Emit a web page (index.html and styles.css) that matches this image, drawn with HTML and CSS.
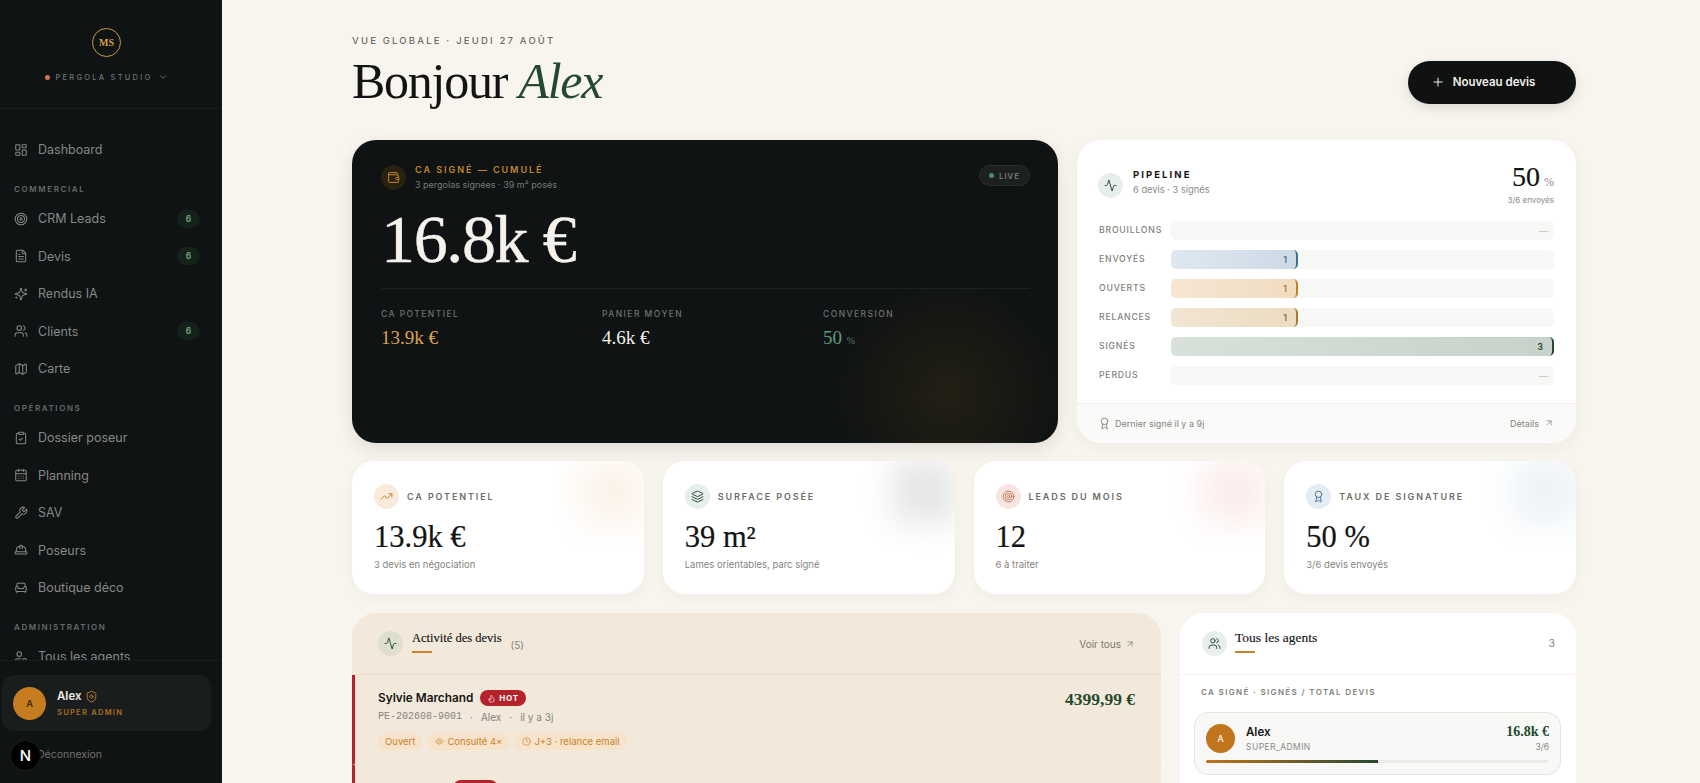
FILE: index.html
```html
<!DOCTYPE html>
<html lang="fr">
<head>
<meta charset="utf-8">
<title>Pergola Studio</title>
<link rel="stylesheet" href="styles.css">
</head>
<body>
<svg class="defs" width="0" height="0" aria-hidden="true">
<symbol id="i-dash" viewBox="0 0 24 24"><rect x="3" y="3" width="7" height="9" rx="1"/><rect x="14" y="3" width="7" height="5" rx="1"/><rect x="14" y="12" width="7" height="9" rx="1"/><rect x="3" y="16" width="7" height="5" rx="1"/></symbol>
<symbol id="i-target" viewBox="0 0 24 24"><circle cx="12" cy="12" r="10"/><circle cx="12" cy="12" r="6"/><circle cx="12" cy="12" r="2"/></symbol>
<symbol id="i-file" viewBox="0 0 24 24"><path d="M15 2H6a2 2 0 0 0-2 2v16a2 2 0 0 0 2 2h12a2 2 0 0 0 2-2V7Z"/><path d="M14 2v4a2 2 0 0 0 2 2h4"/><path d="M10 9H8"/><path d="M16 13H8"/><path d="M16 17H8"/></symbol>
<symbol id="i-spark" viewBox="0 0 24 24"><path d="M9.937 15.5A2 2 0 0 0 8.5 14.063l-6.135-1.582a.5.5 0 0 1 0-.962L8.5 9.936A2 2 0 0 0 9.937 8.5l1.582-6.135a.5.5 0 0 1 .963 0L14.063 8.5A2 2 0 0 0 15.5 9.937l6.135 1.581a.5.5 0 0 1 0 .964L15.5 14.063a2 2 0 0 0-1.437 1.437l-1.582 6.135a.5.5 0 0 1-.963 0z"/><path d="M20 3v4"/><path d="M22 5h-4"/><path d="M4 17v2"/><path d="M5 18H3"/></symbol>
<symbol id="i-users" viewBox="0 0 24 24"><path d="M16 21v-2a4 4 0 0 0-4-4H6a4 4 0 0 0-4 4v2"/><circle cx="9" cy="7" r="4"/><path d="M22 21v-2a4 4 0 0 0-3-3.87"/><path d="M16 3.13a4 4 0 0 1 0 7.75"/></symbol>
<symbol id="i-map" viewBox="0 0 24 24"><path d="M14.106 5.553a2 2 0 0 0 1.788 0l3.659-1.83A1 1 0 0 1 21 4.619v12.764a1 1 0 0 1-.553.894l-4.553 2.277a2 2 0 0 1-1.788 0l-4.212-2.106a2 2 0 0 0-1.788 0l-3.659 1.83A1 1 0 0 1 3 19.381V6.618a1 1 0 0 1 .553-.894l4.553-2.277a2 2 0 0 1 1.788 0z"/><path d="M15 5.764v15"/><path d="M9 3.236v15"/></symbol>
<symbol id="i-clip" viewBox="0 0 24 24"><rect x="8" y="2" width="8" height="4" rx="1"/><path d="M16 4h2a2 2 0 0 1 2 2v14a2 2 0 0 1-2 2H6a2 2 0 0 1-2-2V6a2 2 0 0 1 2-2h2"/><path d="m9 14 2 2 4-4"/></symbol>
<symbol id="i-cal" viewBox="0 0 24 24"><path d="M8 2v4"/><path d="M16 2v4"/><rect x="3" y="4" width="18" height="18" rx="2"/><path d="M3 10h18"/><path d="M8 14h.01M12 14h.01M16 14h.01M8 18h.01M12 18h.01M16 18h.01"/></symbol>
<symbol id="i-wrench" viewBox="0 0 24 24"><path d="M14.7 6.3a1 1 0 0 0 0 1.4l1.6 1.6a1 1 0 0 0 1.4 0l3.77-3.77a6 6 0 0 1-7.94 7.94l-6.91 6.91a2.12 2.12 0 0 1-3-3l6.91-6.91a6 6 0 0 1 7.94-7.94l-3.76 3.76z"/></symbol>
<symbol id="i-hat" viewBox="0 0 24 24"><path d="M10 10V5a1 1 0 0 1 1-1h2a1 1 0 0 1 1 1v5"/><path d="M14 6a6 6 0 0 1 6 6v3"/><path d="M4 15v-3a6 6 0 0 1 6-6"/><rect x="2" y="15" width="20" height="4" rx="1"/></symbol>
<symbol id="i-sofa" viewBox="0 0 24 24"><path d="M19 9V6a2 2 0 0 0-2-2H7a2 2 0 0 0-2 2v3"/><path d="M3 16a2 2 0 0 0 2 2h14a2 2 0 0 0 2-2v-5a2 2 0 0 0-4 0v1.5a.5.5 0 0 1-.5.5h-9a.5.5 0 0 1-.5-.5V11a2 2 0 0 0-4 0z"/><path d="M5 18v2"/><path d="M19 18v2"/></symbol>
<symbol id="i-agent" viewBox="0 0 24 24"><circle cx="9" cy="7" r="4"/><path d="M2 21v-2a4 4 0 0 1 4-4h5"/><circle cx="18" cy="18" r="3.5"/></symbol>
<symbol id="i-shield" viewBox="0 0 24 24"><path d="M20 13c0 5-3.5 7.5-7.66 8.95a1 1 0 0 1-.67-.01C7.5 20.5 4 18 4 13V6a1 1 0 0 1 1-1c2 0 4.5-1.2 6.24-2.72a1.17 1.17 0 0 1 1.52 0C14.51 3.81 17 5 19 5a1 1 0 0 1 1 1z"/><circle cx="12" cy="12" r="3"/></symbol>
<symbol id="i-wallet" viewBox="0 0 24 24"><path d="M19 7V4a1 1 0 0 0-1-1H5a2 2 0 0 0 0 4h15a1 1 0 0 1 1 1v4h-3a2 2 0 0 0 0 4h3a1 1 0 0 0 1-1v-2a1 1 0 0 0-1-1"/><path d="M3 5v14a2 2 0 0 0 2 2h15a1 1 0 0 0 1-1v-4"/></symbol>
<symbol id="i-activity" viewBox="0 0 24 24"><path d="M22 12h-2.48a2 2 0 0 0-1.93 1.46l-2.35 8.36a.25.25 0 0 1-.48 0L9.24 2.18a.25.25 0 0 0-.48 0l-2.35 8.36A2 2 0 0 1 4.49 12H2"/></symbol>
<symbol id="i-trend" viewBox="0 0 24 24"><path d="M16 7h6v6"/><path d="m22 7-8.5 8.5-5-5L2 17"/></symbol>
<symbol id="i-layers" viewBox="0 0 24 24"><path d="M12.83 2.18a2 2 0 0 0-1.66 0L2.6 6.08a1 1 0 0 0 0 1.83l8.58 3.91a2 2 0 0 0 1.66 0l8.58-3.9a1 1 0 0 0 0-1.83z"/><path d="M2 12a1 1 0 0 0 .58.91l8.6 3.91a2 2 0 0 0 1.65 0l8.58-3.9A1 1 0 0 0 22 12"/><path d="M2 17a1 1 0 0 0 .58.91l8.6 3.91a2 2 0 0 0 1.65 0l8.58-3.9A1 1 0 0 0 22 17"/></symbol>
<symbol id="i-award" viewBox="0 0 24 24"><path d="m15.477 12.89 1.515 8.526a.5.5 0 0 1-.81.47l-3.58-2.687a1 1 0 0 0-1.197 0l-3.586 2.686a.5.5 0 0 1-.81-.469l1.514-8.526"/><circle cx="12" cy="8" r="6"/></symbol>
<symbol id="i-flame" viewBox="0 0 24 24"><path d="M8.5 14.5A2.5 2.5 0 0 0 11 12c0-1.38-.5-2-1-3-1.072-2.143-.224-4.054 2-6 .5 2.5 2 4.9 4 6.5 2 1.6 3 3.5 3 5.5a7 7 0 1 1-14 0c0-1.153.433-2.294 1-3a2.5 2.5 0 0 0 2.5 2.5z"/></symbol>
<symbol id="i-eye" viewBox="0 0 24 24"><path d="M2.062 12.348a1 1 0 0 1 0-.696 10.75 10.75 0 0 1 19.876 0 1 1 0 0 1 0 .696 10.75 10.75 0 0 1-19.876 0"/><circle cx="12" cy="12" r="3"/></symbol>
<symbol id="i-clock" viewBox="0 0 24 24"><circle cx="12" cy="12" r="10"/><path d="M12 6v6l4 2"/></symbol>
<symbol id="i-arrow" viewBox="0 0 24 24"><path d="M7 7h10v10"/><path d="M7 17 17 7"/></symbol>
<symbol id="i-plus" viewBox="0 0 24 24"><path d="M5 12h14"/><path d="M12 5v14"/></symbol>
<symbol id="i-chev" viewBox="0 0 24 24"><path d="m6 9 6 6 6-6"/></symbol>
</svg>

<div class="app">
  <aside class="sidebar">
    <div class="brand">
      <div class="logo">MS</div>
      <div class="studio"><span class="studio-dot"></span><span>PERGOLA STUDIO</span><svg class="ico ico-10"><use href="#i-chev"/></svg></div>
    </div>
    <nav class="nav">
      <a class="nav-item"><svg class="ico ico-14"><use href="#i-dash"/></svg><span>Dashboard</span></a>
      <div class="nav-title">COMMERCIAL</div>
      <a class="nav-item"><svg class="ico ico-14"><use href="#i-target"/></svg><span>CRM Leads</span><b class="count">6</b></a>
      <a class="nav-item"><svg class="ico ico-14"><use href="#i-file"/></svg><span>Devis</span><b class="count">6</b></a>
      <a class="nav-item"><svg class="ico ico-14"><use href="#i-spark"/></svg><span>Rendus IA</span></a>
      <a class="nav-item"><svg class="ico ico-14"><use href="#i-users"/></svg><span>Clients</span><b class="count">6</b></a>
      <a class="nav-item"><svg class="ico ico-14"><use href="#i-map"/></svg><span>Carte</span></a>
      <div class="nav-title">OPÉRATIONS</div>
      <a class="nav-item"><svg class="ico ico-14"><use href="#i-clip"/></svg><span>Dossier poseur</span></a>
      <a class="nav-item"><svg class="ico ico-14"><use href="#i-cal"/></svg><span>Planning</span></a>
      <a class="nav-item"><svg class="ico ico-14"><use href="#i-wrench"/></svg><span>SAV</span></a>
      <a class="nav-item"><svg class="ico ico-14"><use href="#i-hat"/></svg><span>Poseurs</span></a>
      <a class="nav-item"><svg class="ico ico-14"><use href="#i-sofa"/></svg><span>Boutique déco</span></a>
      <div class="nav-title">ADMINISTRATION</div>
      <a class="nav-item"><svg class="ico ico-14"><use href="#i-agent"/></svg><span>Tous les agents</span></a>
    </nav>
    <div class="side-foot">
      <div class="user-card">
        <div class="user-avatar">A</div>
        <div class="user-text">
          <div class="user-name">Alex <svg class="ico ico-12"><use href="#i-shield"/></svg></div>
          <div class="user-role">SUPER ADMIN</div>
        </div>
      </div>
      <div class="logout">Déconnexion</div>
      <div class="next-badge">N</div>
    </div>
  </aside>

  <main class="main">
    <header class="page-head">
      <div>
        <div class="eyebrow">VUE GLOBALE · JEUDI 27 AOÛT</div>
        <h1 class="hello">Bonjour <em>Alex</em></h1>
      </div>
      <button class="new-btn"><svg class="ico ico-14"><use href="#i-plus"/></svg>Nouveau devis</button>
    </header>

    <section class="top-grid">
      <article class="hero">
        <div class="hero-head">
          <span class="round hero-icon"><svg class="ico ico-12"><use href="#i-wallet"/></svg></span>
          <div>
            <div class="hero-title">CA SIGNÉ — CUMULÉ</div>
            <div class="hero-sub">3 pergolas signées · 39 m² posés</div>
          </div>
          <span class="live"><i></i>LIVE</span>
        </div>
        <div class="hero-value">16.8k €</div>
        <div class="hero-stats">
          <div><div class="stat-label">CA POTENTIEL</div><div class="stat-value gold">13.9k €</div></div>
          <div><div class="stat-label">PANIER MOYEN</div><div class="stat-value">4.6k €</div></div>
          <div><div class="stat-label">CONVERSION</div><div class="stat-value green">50 <small>%</small></div></div>
        </div>
      </article>

      <article class="pipeline">
        <div class="pipe-head">
          <span class="round round-green"><svg class="ico ico-12"><use href="#i-activity"/></svg></span>
          <div class="pipe-titles">
            <div class="pipe-title">PIPELINE</div>
            <div class="pipe-sub">6 devis · 3 signés</div>
          </div>
          <div class="pipe-rate">
            <div class="pipe-num">50 <small>%</small></div>
            <div class="pipe-sub-r">3/6 envoyés</div>
          </div>
        </div>
        <div class="pipe-rows">
          <div class="pipe-row"><span class="pipe-label">BROUILLONS</span><div class="track"><span class="empty">—</span></div></div>
          <div class="pipe-row"><span class="pipe-label">ENVOYÉS</span><div class="track"><div class="fill fill-blue">1</div></div></div>
          <div class="pipe-row"><span class="pipe-label">OUVERTS</span><div class="track"><div class="fill fill-orange">1</div></div></div>
          <div class="pipe-row"><span class="pipe-label">RELANCES</span><div class="track"><div class="fill fill-sand">1</div></div></div>
          <div class="pipe-row"><span class="pipe-label">SIGNÉS</span><div class="track"><div class="fill fill-green fill-full">3</div></div></div>
          <div class="pipe-row"><span class="pipe-label">PERDUS</span><div class="track"><span class="empty">—</span></div></div>
        </div>
        <div class="pipe-foot">
          <span class="pipe-last"><svg class="ico ico-12"><use href="#i-award"/></svg>Dernier signé il y a 9j</span>
          <span class="pipe-link">Détails <svg class="ico ico-10"><use href="#i-arrow"/></svg></span>
        </div>
      </article>
    </section>

    <section class="kpis">
      <article class="kpi kpi-orange">
        <div class="kpi-head"><span class="round round-orange"><svg class="ico ico-12"><use href="#i-trend"/></svg></span><span class="kpi-label">CA POTENTIEL</span></div>
        <div class="kpi-value">13.9k €</div>
        <div class="kpi-sub">3 devis en négociation</div>
      </article>
      <article class="kpi kpi-green">
        <div class="kpi-head"><span class="round round-green"><svg class="ico ico-12"><use href="#i-layers"/></svg></span><span class="kpi-label">SURFACE POSÉE</span></div>
        <div class="kpi-value">39 m²</div>
        <div class="kpi-sub">Lames orientables, parc signé</div>
      </article>
      <article class="kpi kpi-red">
        <div class="kpi-head"><span class="round round-red"><svg class="ico ico-12"><use href="#i-target"/></svg></span><span class="kpi-label">LEADS DU MOIS</span></div>
        <div class="kpi-value">12</div>
        <div class="kpi-sub">6 à traiter</div>
      </article>
      <article class="kpi kpi-blue">
        <div class="kpi-head"><span class="round round-blue"><svg class="ico ico-12"><use href="#i-award"/></svg></span><span class="kpi-label">TAUX DE SIGNATURE</span></div>
        <div class="kpi-value">50 %</div>
        <div class="kpi-sub">3/6 devis envoyés</div>
      </article>
    </section>

    <section class="bottom-grid">
      <article class="activity">
        <div class="panel-head">
          <span class="round round-olive"><svg class="ico ico-12"><use href="#i-activity"/></svg></span>
          <div class="panel-title-wrap"><div class="panel-title">Activité des devis</div><div class="rule"></div></div>
          <span class="panel-count">(5)</span>
          <span class="voir">Voir tous <svg class="ico ico-10"><use href="#i-arrow"/></svg></span>
        </div>
        <div class="deal">
          <div class="deal-main">
            <div class="deal-line"><span class="deal-name">Sylvie Marchand</span><span class="hot"><svg class="ico ico-9"><use href="#i-flame"/></svg>HOT</span></div>
            <div class="deal-meta"><span class="mono">PE-202608-9001</span><span>·</span><span>Alex</span><span>·</span><span>il y a 3j</span></div>
            <div class="tags">
              <span class="tag">Ouvert</span>
              <span class="tag"><svg class="ico ico-9"><use href="#i-eye"/></svg>Consulté 4×</span>
              <span class="tag"><svg class="ico ico-9"><use href="#i-clock"/></svg>J+3 · relance email</span>
            </div>
          </div>
          <div class="deal-amount">4399,99 €</div>
        </div>
        <div class="deal">
          <div class="deal-main">
            <div class="deal-line"><span class="deal-name">Paul Lebrun</span><span class="hot"><svg class="ico ico-9"><use href="#i-flame"/></svg>HOT</span></div>
          </div>
        </div>
      </article>

      <article class="agents">
        <div class="panel-head panel-head-agents">
          <span class="round round-green"><svg class="ico ico-12"><use href="#i-users"/></svg></span>
          <div class="panel-title-wrap"><div class="panel-title panel-title-lg">Tous les agents</div><div class="rule"></div></div>
          <span class="agent-count">3</span>
        </div>
        <div class="agents-body">
          <div class="agents-cap">CA SIGNÉ · SIGNÉS / TOTAL DEVIS</div>
          <div class="agent">
            <div class="agent-top">
              <div class="agent-avatar">A</div>
              <div class="agent-id"><div class="agent-name">Alex</div><div class="agent-role">SUPER_ADMIN</div></div>
              <div class="agent-num"><div class="agent-ca">16.8k €</div><div class="agent-ratio">3/6</div></div>
            </div>
            <div class="agent-bar"><div class="agent-fill"></div></div>
          </div>
        </div>
      </article>
    </section>
  </main>
</div>
</body>
</html>
```

FILE: styles.css
```css
* { box-sizing: border-box; }
html, body { margin: 0; height: 100%; overflow: hidden; }
body { font-family: Inter, "Liberation Sans", sans-serif; background: #f8f5ef; color: #111; }
.defs { position: absolute; }
.ico { fill: none; stroke: currentColor; stroke-width: 1.75; stroke-linecap: round; stroke-linejoin: round; flex: none; }
.ico-9 { width: 9px; height: 9px; }
.ico-10 { width: 10px; height: 10px; }
.ico-11 { width: 11px; height: 11px; }
.ico-12 { width: 13px; height: 13px; }
.ico-14 { width: 14px; height: 14px; }

.app { display: flex; height: 783px; }

/* Sidebar */
.sidebar { width: 222px; flex: none; height: 783px; background: #0f1313; display: flex; flex-direction: column; color: #8a8d8a; border-right: 1px solid #15191a; }
.brand { height: 109px; flex: none; border-bottom: 1px solid #191d1d; display: flex; flex-direction: column; align-items: center; padding: 28px 8px 0 0; }
.logo { width: 29px; height: 29px; border-radius: 50%; border: 1.5px solid #c99a45; color: #d3a04b; font: 700 10px "Liberation Serif", serif; display: flex; align-items: center; justify-content: center; }
.studio { margin-top: 15px; display: flex; align-items: center; gap: 5px; font-size: 7.5px; font-weight: 500; letter-spacing: 0.3em; color: #6f7270; }
.studio .ico { stroke-width: 2.25; }
.studio-dot { width: 5px; height: 5px; border-radius: 50%; background: #d0705a; }
.nav { flex: 1; min-height: 0; overflow: hidden; padding: 22px 0 0 14px; }
.nav-item { display: flex; align-items: center; height: 37.5px; font-size: 12.5px; color: #858886; gap: 10px; padding-right: 21px; }
.nav-item span { flex: 1; }
.count { width: 23px; height: 18px; border-radius: 9px; background: #142219; color: #79a986; font-size: 8.5px; font-weight: 600; display: flex; align-items: center; justify-content: center; }
.nav-title { font-size: 8px; font-weight: 600; letter-spacing: 0.2em; color: #666a68; height: 13px; line-height: 13px; margin-top: 14.5px; margin-bottom: 4px; }
.side-foot { flex: none; height: 123px; border-top: 1px solid #191d1d; position: relative; padding: 14px 10px 0 2px; }
.user-card { height: 56px; background: #191d1d; border-radius: 12px; display: flex; align-items: center; padding-left: 11px; gap: 11px; }
.user-avatar { width: 33px; height: 33px; border-radius: 50%; background: #c67d20; color: #4d2a08; font-size: 9px; font-weight: 700; display: flex; align-items: center; justify-content: center; }
.user-name { font-size: 11.5px; font-weight: 600; color: #eceae5; display: flex; align-items: center; gap: 4px; }
.user-name .ico { color: #b97c26; }
.user-role { font-size: 7.5px; font-weight: 600; letter-spacing: 0.17em; color: #a9701f; margin-top: 5px; }
.logout { position: absolute; left: 37px; top: 87px; font-size: 10.5px; color: #6f7270; }
.next-badge { position: absolute; left: 10px; top: 79px; width: 31px; height: 31px; border-radius: 50%; background: #000; color: #fff; border: 1px solid #1c1c1c; display: flex; align-items: center; justify-content: center; font-size: 15px; font-weight: 500; }

/* Main */
.main { flex: 1; min-width: 0; height: 783px; overflow: hidden; padding: 0 124px 0 130px; }
.page-head { height: 140px; display: flex; justify-content: space-between; align-items: flex-start; padding-top: 35px; }
.eyebrow { font-size: 9.5px; font-weight: 500; letter-spacing: 0.23em; color: #6d6c66; line-height: 12px; }
.hello { margin: 7px 0 0; font: 400 50px/54px "Liberation Serif", serif; letter-spacing: -0.025em; color: #121414; }
.hello em { color: #24492f; }
.new-btn { margin-top: 25.5px; width: 168px; height: 43px; border-radius: 22px; border: 0; background: #101212; color: #f1efea; font: 600 11.5px Inter, sans-serif; display: flex; align-items: center; justify-content: center; gap: 8px; box-shadow: 0 4px 12px rgba(0,0,0,.12); padding-right: 24px; }

.top-grid { display: grid; grid-template-columns: 706px 499px; gap: 19px; height: 303px; }
.hero { background: #0f1313; border-radius: 24px; padding: 24px 28px 24px 29px; position: relative; overflow: hidden; color: #f5f2ec; box-shadow: 0 6px 18px rgba(0,0,0,.1); }
.hero::after { content: ""; position: absolute; right: -10px; bottom: -70px; width: 240px; height: 240px; background: radial-gradient(circle, rgba(170,120,30,.12), rgba(170,120,30,0) 68%); }
.hero-head { display: flex; align-items: center; gap: 9px; }
.round { width: 25px; height: 25px; border-radius: 50%; display: flex; align-items: center; justify-content: center; flex: none; }
.hero-icon { background: #2a2211; color: #c98a2c; }
.hero-title { font-size: 9px; font-weight: 600; letter-spacing: 0.22em; color: #c5862b; line-height: 12px; }
.hero-sub { font-size: 9px; color: #777a77; line-height: 13px; margin-top: 1.5px; }
.live { margin-left: auto; margin-top: -3px; height: 21px; width: 51px; border-radius: 11px; background: #1c2120; border: 1px solid #2a2f2e; font-size: 8px; font-weight: 500; letter-spacing: 0.12em; color: #7f8380; display: flex; align-items: center; justify-content: center; gap: 5px; }
.live i { width: 5px; height: 5px; border-radius: 50%; background: #4f8a68; }
.hero-value { font: 400 68px/72px "Liberation Serif", serif; letter-spacing: -0.02em; margin-top: 12px; -webkit-text-stroke: 0.4px #f5f2ec; }
.hero-stats { margin-top: 13px; padding-top: 19px; border-top: 1px solid #1d2221; display: grid; grid-template-columns: repeat(3, 221px); }
.stat-label { font-size: 8.5px; font-weight: 500; letter-spacing: 0.17em; color: #6f7270; line-height: 12px; }
.stat-value { font: 400 19px/24px "Liberation Serif", serif; margin-top: 6px; color: #f2efe8; }
.gold { color: #dca252; }
.green { color: #5f9a78; }
.green small { font-size: 10px; color: #5f7a68; }

.pipeline { background: #fff; border-radius: 24px; overflow: hidden; box-shadow: 0 4px 14px rgba(60,50,30,.05); display: flex; flex-direction: column; }
.pipe-head { display: flex; align-items: center; gap: 10px; padding: 20px 22px 0 21px; height: 70px; }
.round-green { background: #e8eeeb; color: #24492f; }
.round-olive { background: #dfdfcf; color: #24492f; }
.round-orange { background: #f9ebdc; color: #c97f25; }
.round-red { background: #f6e6e2; color: #c76c4c; }
.round-blue { background: #e4edf4; color: #3f6f93; }
.pipe-titles { flex: 1; margin-top: -5px; }
.pipe-title { font-size: 9.5px; font-weight: 700; letter-spacing: 0.22em; color: #141414; line-height: 12px; }
.pipe-sub { font-size: 9.3px; color: #8b8a85; line-height: 13px; margin-top: 2px; }
.pipe-rate { text-align: right; margin-top: -1px; }
.pipe-num { font: 400 28px/25px "Liberation Serif", serif; color: #141414; -webkit-text-stroke: 0.2px #141414; }
.pipe-num small { font-size: 12px; color: #8b8a85; margin-left: -3px; -webkit-text-stroke: 0; }
.pipe-sub-r { font-size: 8px; color: #8b8a85; line-height: 10px; }
.pipe-rows { padding: 10.5px 22px 0 22px; display: flex; flex-direction: column; gap: 10px; flex: 1; }
.pipe-row { display: flex; align-items: center; height: 19px; }
.pipe-label { width: 72px; font-size: 8.7px; font-weight: 500; letter-spacing: 0.09em; color: #807f7a; }
.track { flex: 1; height: 19px; border-radius: 5px; background: #f7f7f5; position: relative; display: flex; align-items: center; justify-content: flex-end; }
.empty { color: #c2c2bd; font-size: 9px; margin-right: 6px; }
.fill { position: absolute; left: 0; top: 0; bottom: 0; width: 127px; border-radius: 5px; display: flex; align-items: center; justify-content: flex-end; padding-right: 9px; font-size: 9px; font-weight: 600; border-right: 2px solid; }
.fill-full { width: 100%; }
.fill-blue { background: linear-gradient(90deg, #dfe8f0, #ccdae6); border-color: #3f6f93; color: #46708f; }
.fill-orange { background: linear-gradient(90deg, #f6e6d3, #f0dcc0); border-color: #c97f25; color: #b1782f; }
.fill-sand { background: linear-gradient(90deg, #f1e6d3, #ecdcc0); border-color: #a97c2d; color: #8f6f35; }
.fill-green { background: linear-gradient(90deg, #d8e0da, #c7d2cb); border-color: #24492f; color: #24492f; }
.pipe-foot { height: 40px; background: #fafaf8; border-top: 1px solid #f1f0ec; display: flex; align-items: center; justify-content: space-between; padding: 0 22px 1px 21px; font-size: 9px; color: #85847f; }
.pipe-last { display: flex; align-items: center; gap: 4px; }
.pipe-link { display: flex; align-items: center; gap: 5px; }

.kpis { display: grid; grid-template-columns: repeat(4, 1fr); gap: 19px; margin-top: 18px; }
.kpi { height: 133px; background: #fff; border-radius: 22px; padding: 23px 22px 0; position: relative; overflow: hidden; box-shadow: 0 4px 14px rgba(60,50,30,.04); }
.kpi::after { content: ""; position: absolute; right: -2px; top: -2px; width: 64px; height: 64px; filter: blur(17px); opacity: .11; }
.kpi-orange::after { background: #e0913c; }
.kpi-green::after { background: #2a3f33; opacity: .13; }
.kpi-red::after { background: #d9604a; }
.kpi-blue::after { background: #5d8fb8; }
.kpi-head { display: flex; align-items: center; gap: 8px; height: 25px; }
.kpi-label { font-size: 9px; font-weight: 600; letter-spacing: 0.21em; color: #6d6c66; }
.kpi-value { font: 400 30.5px/38px "Liberation Serif", serif; color: #141414; margin-top: 9px; -webkit-text-stroke: 0.2px #141414; }
.kpi-sub { font-size: 9.5px; color: #85847f; margin-top: 2px; line-height: 13px; }

.bottom-grid { display: grid; grid-template-columns: 809px 396px; gap: 19px; margin-top: 19px; align-items: start; }
.activity { background: #f3e9da; border-radius: 24px 24px 0 0; height: 260px; overflow: hidden; }
.panel-head { height: 62px; display: flex; align-items: center; padding: 0 26px; gap: 8px; border-bottom: 1px solid #ebe0cf; }
.panel-title-wrap { margin-top: -4px; margin-left: 1px; }
.panel-title { font: 400 12.5px/16px "Liberation Serif", serif; color: #141414; -webkit-text-stroke: 0.15px #141414; }
.panel-title-lg { font-size: 13.5px; }
.rule { width: 20px; height: 2px; background: #c9822f; margin-top: 5px; }
.panel-count { font-size: 10px; color: #85847f; margin-left: 1px; margin-top: 2px; }
.voir { margin-left: auto; font-size: 10px; color: #7a7972; display: flex; align-items: center; gap: 4px; }
.deal { height: 90px; border-left: 3px solid #b4232c; border-bottom: 1px solid #efe4d3; padding: 13px 26px 0 23px; display: flex; justify-content: space-between; }
.deal-line { display: flex; align-items: center; gap: 7px; height: 20px; }
.deal-name { font-size: 11.8px; font-weight: 600; color: #151515; }
.hot { height: 16px; padding: 0 7px; border-radius: 8px; background: #b4232c; color: #fff; font-size: 8px; font-weight: 700; letter-spacing: 0.1em; display: flex; align-items: center; gap: 3px; }
.deal-meta { display: flex; gap: 8px; font-size: 10px; color: #85847f; margin-top: 2px; line-height: 14px; }
.mono { font-family: "Liberation Mono", monospace; font-size: 10px; letter-spacing: 0; }
.tags { display: flex; gap: 6px; margin-top: 9px; }
.tag { height: 17px; padding: 0 7px; border-radius: 8px; background: #f7e3c9; color: #c9822f; font-size: 9.5px; display: flex; align-items: center; gap: 3px; }
.deal-amount { font: 700 17.5px/24px "Liberation Serif", serif; color: #24492f; margin-top: -1px; }

.agents { background: #fff; border-radius: 24px 24px 0 0; height: 260px; overflow: hidden; }
.panel-head-agents { padding: 0 21px 0 22px; border-bottom-color: #f3f2ee; gap: 7px; }
.agent-count { margin-left: auto; font-size: 10.5px; color: #85847f; }
.agents-body { padding: 11px 15px 0 14px; }
.agents-cap { font-size: 8px; font-weight: 600; letter-spacing: 0.17em; color: #807f7a; padding-left: 7px; line-height: 12px; }
.agent { margin-top: 14px; height: 63px; border: 1px solid #e4e4e0; border-radius: 14px; background: #f8f8f6; padding: 11px 11px 0 11px; }
.agent-top { display: flex; align-items: center; gap: 11px; height: 29px; }
.agent-avatar { width: 29px; height: 29px; border-radius: 50%; background: #c0751d; color: #f6e7d2; font-size: 9px; font-weight: 600; display: flex; align-items: center; justify-content: center; }
.agent-id { flex: 1; }
.agent-name { font-size: 11.5px; font-weight: 600; color: #151515; line-height: 14px; }
.agent-role { font-size: 8.5px; letter-spacing: 0.05em; color: #8b8a85; line-height: 12px; margin-top: 2px; }
.agent-num { text-align: right; }
.agent-ca { font: 700 14px/14px "Liberation Serif", serif; color: #24492f; }
.agent-ratio { font-size: 8.5px; color: #8b8a85; line-height: 12px; margin-top: 2px; }
.agent-bar { height: 3px; background: #ecebe7; border-radius: 2px; margin-top: 7px; overflow: hidden; }
.agent-fill { width: 50%; height: 100%; background: linear-gradient(90deg, #c0751d, #24492f); }
```
